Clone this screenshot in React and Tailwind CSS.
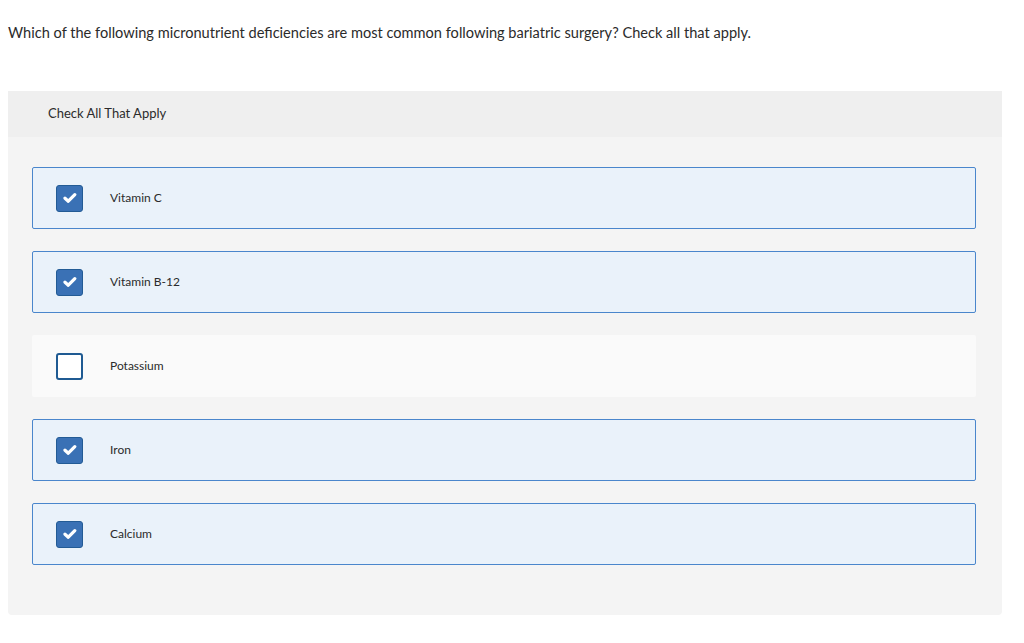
import React from "react";

const items = [
  { label: "Vitamin C", checked: true },
  { label: "Vitamin B-12", checked: true },
  { label: "Potassium", checked: false },
  { label: "Iron", checked: true },
  { label: "Calcium", checked: true },
];

function Check() {
  return (
    <svg width="14" height="12" viewBox="0 0 14 12" fill="none">
      <path d="M2 6.2 L5.3 9.2 L11.8 2.6" stroke="white" strokeWidth="3.2" strokeLinecap="round" strokeLinejoin="round" />
    </svg>
  );
}

export default function App() {
  return (
    <div className="bg-white w-[1024px] h-[643px] text-[#2b2b2b]" style={{ fontFamily: "Lato, 'Open Sans', sans-serif" }}>
      <div className="px-2 pt-[23px] text-[14.6px] leading-5">
        Which of the following micronutrient deficiencies are most common following bariatric surgery? Check all that apply.
      </div>
      <div className="ml-2 mt-[48px] w-[994px] bg-[#f4f4f4] rounded-b-[4px]">
        <div className="h-[46px] bg-[#efefef] flex items-center pl-[40px] text-[13px]">
          Check All That Apply
        </div>
        <div className="pl-6 pr-[26px] pt-[30px] pb-[50px] flex flex-col gap-[22px]">
          {items.map((it) => (
            <div
              key={it.label}
              className={
                "h-[62px] flex items-center pl-[23px] rounded-[2px] border " +
                (it.checked ? "bg-[#eaf2fa] border-[#4a86cc]" : "bg-[#fafafa] border-transparent")
              }
            >
              {it.checked ? (
                <div className="w-[27px] h-[27px] rounded-[3px] bg-[#3a71b5] border border-[#235b95] flex items-center justify-center">
                  <Check />
                </div>
              ) : (
                <div className="w-[27px] h-[27px] rounded-[3px] bg-white border-2 border-[#1f5a92]" />
              )}
              <span className="ml-[27px] text-[12px]">{it.label}</span>
            </div>
          ))}
        </div>
      </div>
    </div>
  );
}
